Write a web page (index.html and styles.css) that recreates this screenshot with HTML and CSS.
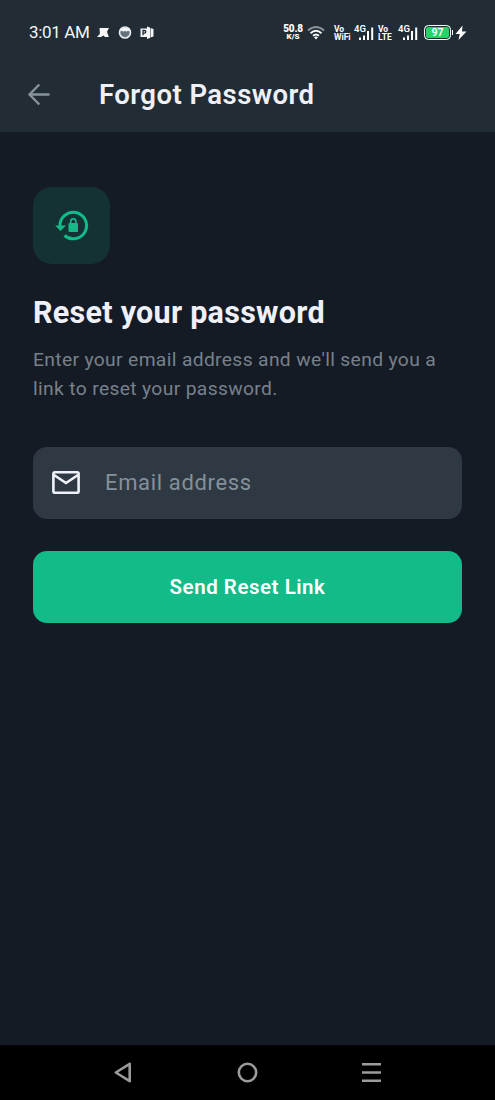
FILE: index.html
```html
<!DOCTYPE html>
<html lang="en">
<head>
<meta charset="utf-8">
<title>Forgot Password</title>
<link rel="stylesheet" href="styles.css">
</head>
<body>
<div class="screen">
  <div class="status">
    <span class="time">3:01 AM</span>
    <svg class="note-icons" width="58" height="14" viewBox="0 0 58 14" fill="#f4f6f7">
      <path d="M3.500 2H13l-2 3.800L12.800 11H9L7.300 9.500 5 11H1l2.900-3.200z"/>
      <circle cx="29" cy="6.500" r="5.500" fill="#65727b" stroke="#e9edef" stroke-width="1.600"/>
      <path d="M24.200 5.500c0-5 9.600-5 9.600 0l-2-.7-1.300 1-1.500-1-1.500 1-1.500-1z"/>
      <path d="M44.500 2.500h7v8.500h-7z"/><path d="M51 .5l3 1v10.500l-3 1zM54.500 2l3 1v7.500l-3 1z"/>
      <path d="M47 9.300V4.500h1.500a1.300 1.300 0 0 1 0 2.600H47" fill="none" stroke="#222c35" stroke-width="1.300"/>
    </svg>
    <span class="stack speed"><b>50.8</b><b class="small">K/S</b></span>
    <svg class="wifi" width="18" height="16" viewBox="0 0 18 16" fill="none" stroke-width="1.900">
      <path d="M1 5.500q8-7 16 0" stroke="#89939a"/>
      <path d="M3.500 8.200q5.500-4.800 11 0M6 10.800q3-2.600 6 0" stroke="#fff"/>
      <path d="M7 12.200q2-1.500 4 0l-2 2.300z" fill="#fff"/>
    </svg>
    <span class="stack volte"><b>Vo</b><b>WiFi</b></span>
    <span class="signal"><b>4G</b><svg width="20" height="16" viewBox="0 0 20 16" fill="#fff"><path d="M5 12.500h2V15H5zM9 10.500h2V15H9zM13 6h2v9h-2zM17.200 2.500h2V15h-2z"/></svg></span>
    <span class="stack volte lte"><b>Vo</b><b>LTE</b></span>
    <span class="signal"><b>4G</b><svg width="20" height="16" viewBox="0 0 20 16" fill="#fff"><path d="M5 12.500h2V15H5zM9 10.500h2V15H9zM13 6h2v9h-2zM17.200 2.500h2V15h-2z"/></svg></span>
    <span class="battery"><b>97</b></span>
    <svg class="bolt" width="12" height="16" viewBox="0 0 12 16"><path d="M7.500 .500L.5 9h4.300L3.500 15 11.500 6.500H7z" fill="#fff"/></svg>
  </div>
  <header class="appbar">
    <svg class="back" width="24" height="24" viewBox="0 0 24 24" fill="none" stroke="#87929a" stroke-width="2.400"><path d="M22.500 11.500H3M12.300 1.500L2.500 11.500l9.800 10"/></svg>
    <h1>Forgot Password</h1>
  </header>
  <main>
    <div class="badge">
      <svg width="77" height="77" viewBox="0 0 77 77" fill="#12bb88">
        <path d="M27 39.500A13.300 13.300 0 1 1 31.500 48.500" fill="none" stroke="#12bb88" stroke-width="3"/>
        <path d="M22.200 38.600h10.800L27.500 44z"/>
        <rect x="35.500" y="36" width="9.500" height="9" rx="1"/>
        <path d="M37.700 36.500v-2a2.600 2.600 0 0 1 5.200 0v2" fill="none" stroke="#12bb88" stroke-width="1.600"/>
      </svg>
    </div>
    <h2>Reset your password</h2>
    <p>Enter your email address and we'll send you a<br>link to reset your password.</p>
    <div class="field">
      <svg width="28" height="24" viewBox="0 0 28 24" fill="none" stroke="#f0f2fa" stroke-width="2.600"><rect x="1.400" y="2.300" width="25.200" height="20.400" rx="1.500"/><path d="M2 5l12 8 12-8"/></svg>
      <span>Email address</span>
    </div>
    <div class="button">Send Reset Link</div>
  </main>
  <nav>
    <svg width="310" height="54" viewBox="0 0 310 54" fill="none" stroke="#9b9b9b" stroke-width="2.600">
      <path d="M39.700 18.800v17.400L25.800 27.500z" stroke-linejoin="round"/>
      <circle cx="157.500" cy="27.500" r="8.700"/>
      <path d="M272 19.300h19M272 27.500h19M272 35.700h19"/>
    </svg>
  </nav>
</div>
</body>
</html>
```
FILE: styles.css
```css
body { margin: 0; }
.screen {
  width: 495px; height: 1100px;
  display: flex; flex-direction: column;
  background: #151b25;
  font-family: Roboto, sans-serif;
  color: #eff0f8;
  overflow: hidden;
  white-space: nowrap;
}
.status {
  height: 55px; flex: none;
  box-sizing: border-box;
  padding: 10px 0 0 29px;
  display: flex; align-items: center;
  background: #222c35; color: #fff;
}
.time { width: 67px; font-size: 17px; line-height: 20px; letter-spacing: -.35px; padding-bottom: 1px; color: #f4f6f7; }
.note-icons { flex: none; }
.stack { display: flex; flex-direction: column; align-items: center; line-height: 8px; }
.speed { width: 20px; margin-left: 129px; font-size: 10px; font-weight: 600; }
.speed b:first-child { letter-spacing: -.2px; }
.small { font-size: 8px; }
.wifi { margin-left: 4px; flex: none; }
.volte { width: 17px; margin-left: 9px; font-size: 8.500px; align-items: flex-start; }
.lte { width: 15px; margin-left: 4px; }
.signal { display: grid; width: 20px; height: 16px; margin-left: 3px; }
.lte + .signal { margin-left: 5px; }
.signal > * { grid-area: 1 / 1; }
.signal b { font-size: 9.500px; line-height: 8px; font-weight: 600; }
.battery {
  box-sizing: border-box;
  width: 27px; height: 15px; margin-left: 6px;
  border: 1px solid #fff; border-radius: 4.500px;
  box-shadow: inset 0 0 0 1px #222c35;
  background: #25d366;
  display: flex; align-items: center; justify-content: center;
  font-size: 10.500px; line-height: 11px;
  position: relative;
}
.battery::after {
  content: ""; position: absolute; right: -3px; top: 4px;
  width: 1.500px; height: 5px; background: #fff;
}
.battery b { font-weight: 600; }
.bolt { margin-left: 4px; flex: none; }
.appbar {
  height: 77px; flex: none;
  box-sizing: border-box;
  padding: 2px 0 0 27px;
  display: flex; align-items: center; gap: 48px;
  background: #222c35;
}
h1 { margin: 0; font-size: 27.500px; line-height: 36px; font-weight: 600; letter-spacing: .44px; }
main { flex: 1; padding: 55px 33px 0; }
.badge { width: 77px; height: 77px; border-radius: 19px; background: #143234; }
.badge svg { display: block; }
h2 { margin: 30px 0 0; font-size: 30.500px; line-height: 38px; font-weight: 700; letter-spacing: .27px; }
p { margin: 13px 0 0; font-size: 19.250px; line-height: 29px; letter-spacing: .35px; color: #78818b; }
.field {
  height: 71.500px; margin-top: 44px; box-sizing: border-box;
  padding: 0 0 1px 19px;
  border-radius: 14px;
  display: flex; align-items: center; gap: 25px;
  background: #2f3943; color: #84909a;
  font-size: 22px; letter-spacing: .65px;
}
.button {
  height: 72px; margin-top: 32.500px; border-radius: 14px;
  box-sizing: border-box; padding-bottom: 1px;
  display: flex; align-items: center; justify-content: center;
  background: #12bb88; color: #fff;
  font-size: 20.500px; font-weight: 600; letter-spacing: .53px;
}
nav { height: 55px; flex: none; padding-left: 90px; background: #000; }
```
